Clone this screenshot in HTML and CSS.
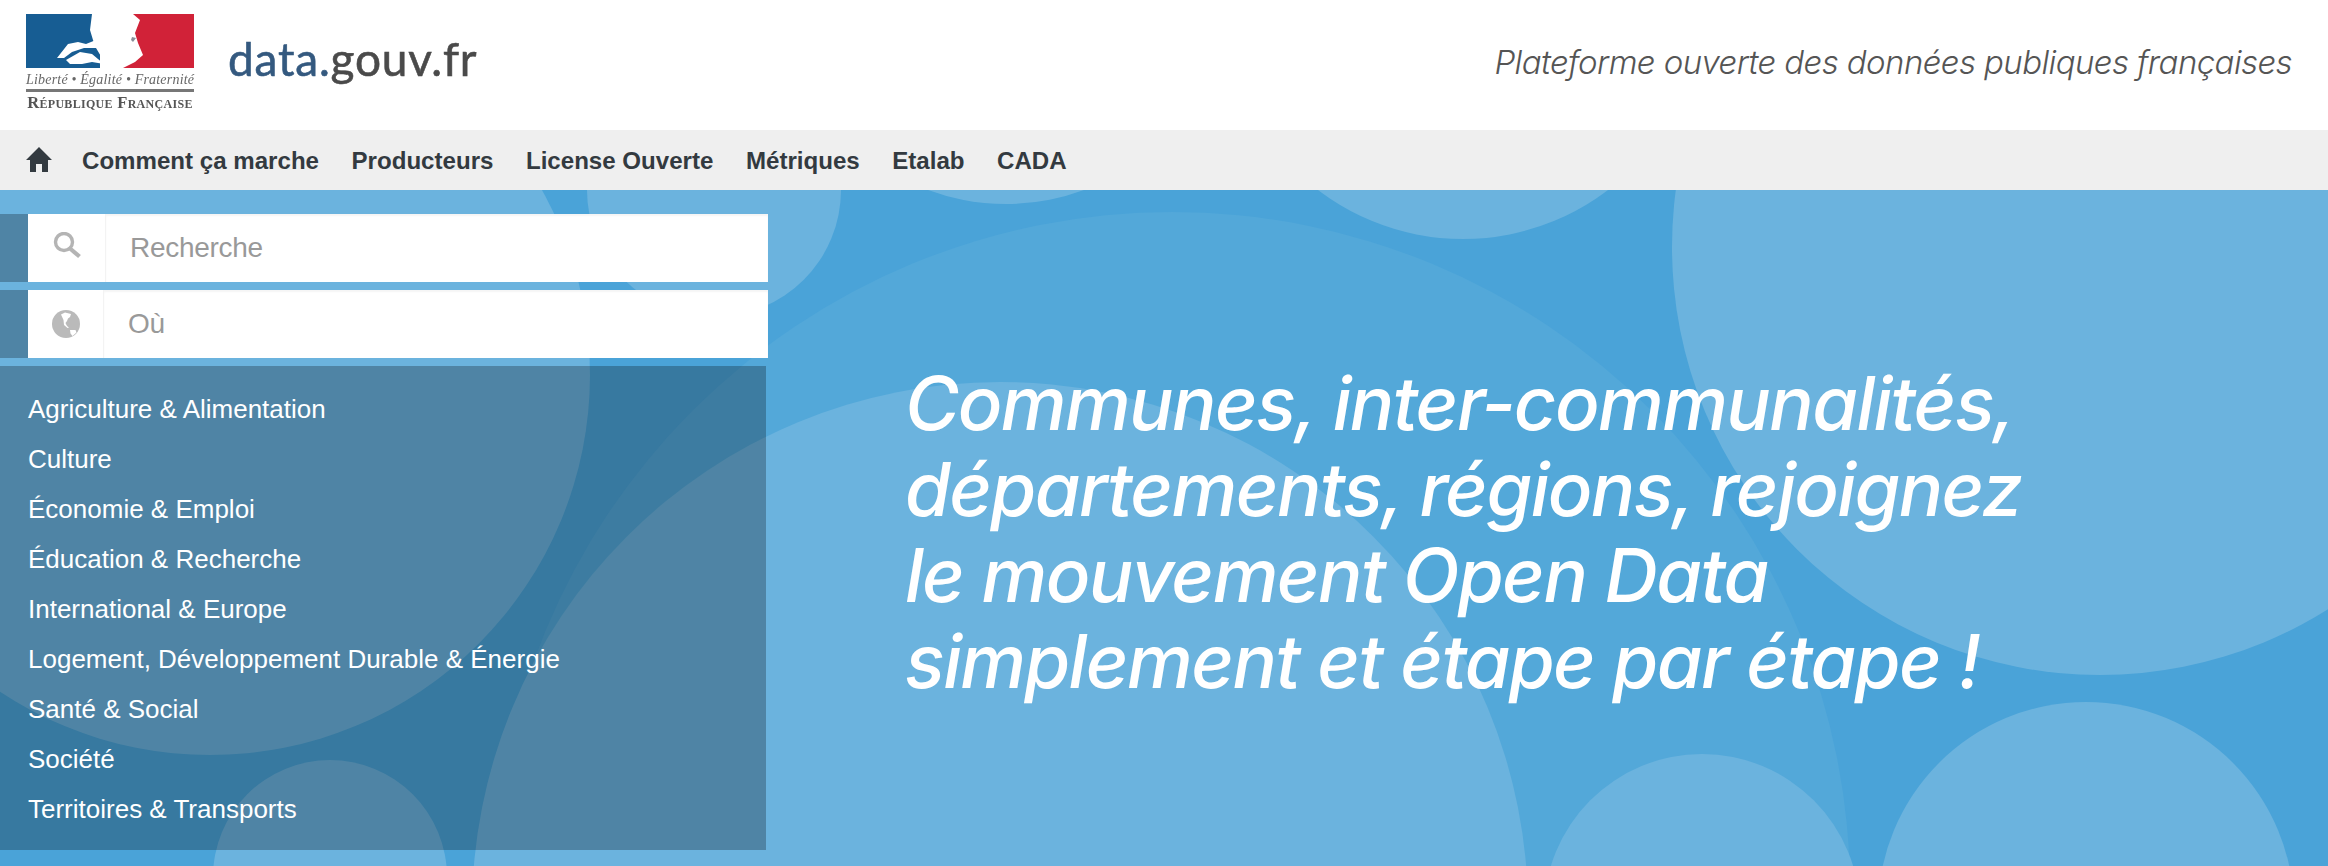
FILE: index.html
```html
<!DOCTYPE html>
<html lang="fr">
<head>
  <meta charset="UTF-8" />
  <title>data.gouv.fr</title>
  <link rel="stylesheet" href="styles.css">
</head>
<body>

  <!-- HEADER -->
  <header class="site-header">
    <a class="brand" href="#">
      <div class="marianne">
        <svg class="flag" viewBox="0 0 168 54" width="168" height="54">
          <rect width="168" height="54" fill="#fff"/>
          <rect width="74" height="54" fill="#175d93"/>
          <rect x="97" width="71" height="54" fill="#d12238"/>
          <!-- profile -->
          <path d="M66 0 L107 0 L114 6 L109 19 L112 29 L117 41 L109 48 L97 54 L74 54 L76 44 L70 34 L67 26 L64 16 Z" fill="#fff"/>
          <!-- hair -->
          <path d="M31 44 L42 30 L52 28 L60 30 L70 26 L72 34 L58 34 L46 38 L38 44 Z" fill="#fff"/>
          <path d="M40 46 L54 38 L66 40 L78 50 L66 48 L56 50 L44 50 Z" fill="#fff"/>
          <path d="M106 23 L110 24 L107 28 L105 26 Z" fill="#8a8f9a"/>
        </svg>
        <div class="devise">Liberté • Égalité • Fraternité</div>
        <div class="devise-rule"></div>
        <div class="republique">République Française</div>
      </div>
      <span class="wordmark"><span class="wordmark-data">data.</span>gouv.fr</span>
    </a>
    <p class="tagline">Plateforme ouverte des données publiques françaises</p>
  </header>

  <!-- NAV -->
  <nav class="main-nav">
    <a class="nav-home" href="#" aria-label="Accueil">
      <svg viewBox="0 0 26 26" width="26" height="26"><path d="M13 0 L26 13 L22 13 L22 25 L16 25 L16 17 L10 17 L10 25 L4 25 L4 13 L0 13 Z" fill="#333a40"/></svg>
    </a>
    <a href="#">Comment ça marche</a>
    <a href="#">Producteurs</a>
    <a href="#">License Ouverte</a>
    <a href="#">Métriques</a>
    <a href="#">Etalab</a>
    <a href="#">CADA</a>
  </nav>

  <!-- HERO -->
  <section class="hero">
    <svg class="bubbles" viewBox="0 0 2328 676" width="2328" height="676" aria-hidden="true">
      <g transform="translate(0 -190)">
        <circle class="bubble-faint" cx="1172" cy="890" r="678"/>
        <circle class="bubble" cx="210" cy="375" r="380"/>
        <circle class="bubble" cx="714" cy="190" r="127"/>
        <circle class="bubble" cx="1006" cy="-20" r="224"/>
        <circle class="bubble" cx="1463" cy="0" r="239"/>
        <circle class="bubble" cx="2100" cy="247" r="428"/>
        <circle class="bubble" cx="1000" cy="910" r="528"/>
        <circle class="bubble" cx="330" cy="877" r="117"/>
        <circle class="bubble" cx="1702" cy="912" r="158"/>
        <circle class="bubble" cx="2086" cy="910" r="208"/>
      </g>
    </svg>

    <div class="search-col">
      <form class="search-row">
        <span class="search-icon icon-lens">
          <svg viewBox="0 0 30 28" width="30" height="28"><circle cx="12" cy="10" r="8.5" fill="none" stroke="#b4b4b4" stroke-width="3.4"/><path d="M18 16.5 L27.5 24.5" stroke="#b4b4b4" stroke-width="4.2"/></svg>
        </span>
        <span class="search-input">Recherche</span>
      </form>
      <form class="search-row search-row-where">
        <span class="search-icon">
          <svg viewBox="0 0 28 28" width="28" height="28"><circle cx="14" cy="14" r="14" fill="#bababa"/><path d="M9 4.5 L13 2.5 L19 4 L18 7 L16 8.5 L15 11 L13.5 13 L15 16 L17 17.5 L15.5 18 L12 15 L11.5 10 Z M18 20 L23.5 20 L24.5 22.5 L20.5 26 L18.5 23.5 Z" fill="#fff"/></svg>
        </span>
        <span class="search-input">Où</span>
      </form>
      <ul class="topics">
        <li><a href="#">Agriculture &amp; Alimentation</a></li>
        <li><a href="#">Culture</a></li>
        <li><a href="#">Économie &amp; Emploi</a></li>
        <li><a href="#">Éducation &amp; Recherche</a></li>
        <li><a href="#">International &amp; Europe</a></li>
        <li><a href="#">Logement, Développement Durable &amp; Énergie</a></li>
        <li><a href="#">Santé &amp; Social</a></li>
        <li><a href="#">Société</a></li>
        <li><a href="#">Territoires &amp; Transports</a></li>
      </ul>
    </div>

    <h1 class="hero-title">Communes, inter-communalités,<br>départements, régions, rejoignez<br>le mouvement Open Data<br>simplement et étape par étape !</h1>
  </section>

</body>
</html>
```

FILE: styles.css
```css
html, body {
  margin: 0;
  padding: 0;
}
body {
  width: 2328px;
  height: 866px;
  overflow: hidden;
  background-color: #fff;
  font-family: "Liberation Sans", Arial, sans-serif;
}
a {
  color: inherit;
  text-decoration: none;
}

/* header */
.site-header {
  height: 130px;
  display: flex;
  align-items: flex-start;
  justify-content: space-between;
  padding: 14px 36px 0 26px;
  box-sizing: border-box;
}
.brand {
  display: flex;
  align-items: flex-start;
}
.marianne {
  width: 168px;
  filter: blur(0.4px);
}
.flag {
  display: block;
}
.devise {
  margin-top: 4px;
  font-family: "Liberation Serif", serif;
  font-style: italic;
  font-size: 14px;
  line-height: 16px;
  letter-spacing: 0.2px;
  color: #666;
  white-space: nowrap;
  text-align: center;
}
.devise-rule {
  height: 3px;
  background-color: #777;
  margin-top: 1px;
}
.republique {
  margin-top: 4px;
  font-family: "Liberation Serif", serif;
  font-weight: bold;
  font-variant: small-caps;
  font-size: 16.5px;
  line-height: 14px;
  letter-spacing: 0.3px;
  color: #555;
  white-space: nowrap;
  text-align: center;
}
.wordmark {
  margin: 17px 0 0 34px;
  font-family: Lato, sans-serif;
  font-size: 46px;
  line-height: 56px;
  letter-spacing: 0.8px;
  color: #4a4a4a;
  filter: blur(0.5px);
  -webkit-text-stroke: 0.6px currentColor;
}
.wordmark-data {
  color: #34597f;
}
.tagline {
  margin: 26px 0 0;
  font-family: Inter, sans-serif;
  font-style: italic;
  font-weight: 300;
  font-size: 33px;
  line-height: 44px;
  letter-spacing: -0.6px;
  color: #555;
}

/* nav */
.main-nav {
  height: 60px;
  box-sizing: border-box;
  display: flex;
  align-items: center;
  gap: 32.5px;
  padding: 2px 0 0 26px;
  background-color: #efefef;
  color: #333a40;
  font-size: 24.1px;
  font-weight: bold;
}
.nav-home {
  display: flex;
  margin: -2px -2.5px 0 0;
}

/* hero */
.hero {
  position: relative;
  height: 676px;
  display: flex;
  align-items: flex-start;
  background-color: #4aa3d8;
  overflow: hidden;
}
.bubbles {
  position: absolute;
  top: 0;
  left: 0;
}
.bubble {
  fill: #6bb3de;
}
.bubble-faint {
  fill: #53a8d9;
}
.search-col {
  position: relative;
  width: 768px;
  margin-top: 24px;
  flex-shrink: 0;
}
.search-row {
  display: flex;
  height: 68px;
  margin: 0 0 8px;
  padding-left: 28px;
  background-color: rgba(4, 7, 12, 0.27);
}
.search-icon {
  width: 78px;
  flex-shrink: 0;
  display: flex;
  align-items: center;
  justify-content: center;
  background-color: #fff;
  border-right: 1px solid #f3f3f3;
  box-sizing: border-box;
}
.icon-lens svg {
  margin-bottom: 4px;
}
.search-row-where .search-icon {
  width: 76px;
}
.search-input {
  flex: 1;
  display: flex;
  align-items: center;
  padding-left: 24px;
  background-color: #fff;
  box-shadow: inset 0 2px 2px #f5f5f5;
  color: #999;
  font-size: 28px;
  letter-spacing: -0.3px;
}
.topics {
  list-style: none;
  width: 766px;
  height: 484px;
  box-sizing: border-box;
  margin: 0;
  padding: 18px 0 0 28px;
  background-color: rgba(4, 7, 12, 0.27);
  color: #fff;
  font-size: 26px;
}
.topics li {
  height: 50px;
  line-height: 50px;
}
.hero-title {
  position: relative;
  margin: 170px 0 0 137px;
  font-family: Inter, sans-serif;
  font-style: italic;
  font-weight: 500;
  font-size: 74px;
  line-height: 86px;
  letter-spacing: -1.6px;
  color: #fff;
  white-space: nowrap;
}
```
